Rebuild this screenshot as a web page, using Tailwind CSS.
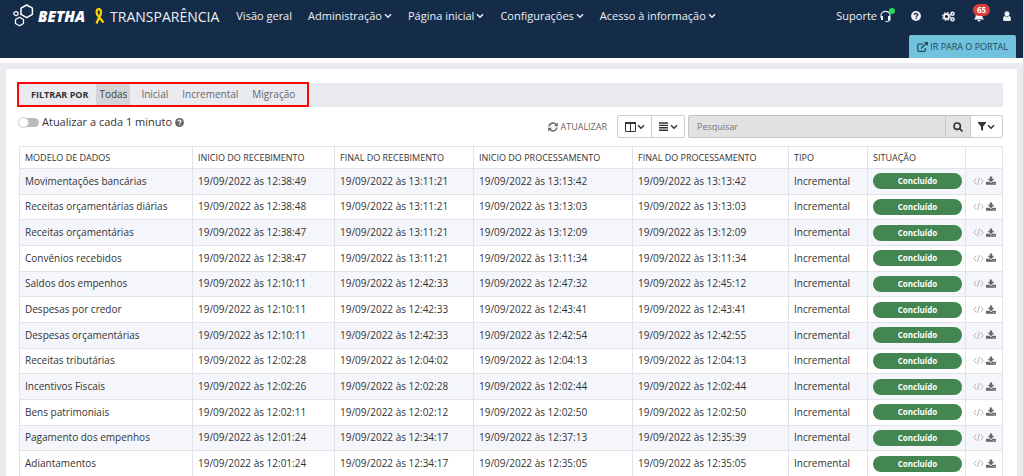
<!DOCTYPE html>
<html lang="pt-BR">
<head>
<meta charset="utf-8">
<meta name="viewport" content="width=device-width, initial-scale=1">
<title>Betha Transparência</title>
<script src="https://cdn.jsdelivr.net/npm/@tailwindcss/browser@4"></script>
</head>
<body class="min-h-screen overflow-x-hidden border-r border-[#d9dade] bg-[#eaebf0] font-['Open_Sans',sans-serif] text-[11px] text-[#333]">
<svg class="hidden">
  <symbol id="chev" viewBox="0 0 8 6"><path d="M1 1.2 4 4.2 7 1.2" fill="none" stroke="currentColor" stroke-width="1.5"/></symbol>
  <symbol id="code" viewBox="0 0 12 10"><path d="M3.5 2 .8 5l2.700 3M8.500 2l2.700 3-2.700 3M7 1 5 9" fill="none" stroke="currentColor" stroke-width="1"/></symbol>
  <symbol id="down" viewBox="0 0 1664 1536"><path fill="currentColor" d="M1280 1216q0-26-19-45t-45-19-45 19-19 45 19 45 45 19 45-19 19-45zm256 0q0-26-19-45t-45-19-45 19-19 45 19 45 45 19 45-19 19-45zm128-224v320q0 40-28 68t-68 28H96q-40 0-68-28t-28-68V992q0-40 28-68t68-28h465l135 136q58 56 136 56t136-56l136-136h464q40 0 68 28t28 68zm-325-569q17 41-14 70l-448 448q-18 19-45 19t-45-19L339 493q-31-29-14-70 17-39 59-39h256V0h384v384h256q42 0 59 39z"/></symbol>
  <symbol id="help" viewBox="0 0 12 12"><circle cx="6" cy="6" r="5.900" fill="currentColor"/><path d="M4 4.700C4 2.200 8 2.200 8 4.600 8 6 6.200 6 6.200 7.300M6.200 8.200v1.500" fill="none" stroke="var(--mark)" stroke-width="1.600"/></symbol>
</svg>

<header class="border-b-[5px] border-white bg-[#152c49] text-[#edf0f4]">
  <div class="flex h-8 items-center pr-3 pl-3">
    <a href="#" class="flex items-center" aria-label="Betha Transparência">
      <svg class="h-6 w-[22px]" viewBox="0 0 22 24" fill="none" stroke="#fff" stroke-linejoin="round"><path d="M14.700 1l5.700 3.200v6.200l-5.700 3.300L9 10.400V4.200z" stroke-width="1.500"/><path d="M7.500 13.300l4 2.200v4l-4 2.300-4-2.300v-4z" stroke-width="1.300"/><path d="M4 7.400l2.100 1.200v2L4 11.800 1.900 10.600v-2z" stroke-width="1.200"/></svg>
      <span class="ml-1 text-[15px] font-extrabold text-white italic">BETHA</span>
      <svg class="ml-[9px] h-4 w-[11px]" viewBox="0 0 11 16" fill="none" stroke="#fbd500" stroke-width="2.200"><path d="M2.500 15.500 5 9.500C8 6 7.500 1.200 4.800 1.200S1.500 6 5 9l4.500 5.500"/></svg>
      <span class="ml-[5px] text-[14px]">TRANSPARÊNCIA</span>
    </a>
    <nav class="ml-[17px] flex items-center gap-4 text-[11px] whitespace-nowrap">
      <a href="#">Visão geral</a>
      <a href="#" class="flex items-center gap-[2px]">Administração<svg class="h-[6px] w-2"><use href="#chev"/></svg></a>
      <a href="#" class="flex items-center gap-[2px]">Página inicial<svg class="h-[6px] w-2"><use href="#chev"/></svg></a>
      <a href="#" class="flex items-center gap-[2px]">Configurações<svg class="h-[6px] w-2"><use href="#chev"/></svg></a>
      <a href="#" class="flex items-center gap-[2px]">Acesso à informação<svg class="h-[6px] w-2"><use href="#chev"/></svg></a>
    </nav>
    <div class="ml-auto flex items-center text-[11px]">
      <a href="#" class="relative flex items-center gap-[3px]">Suporte
        <svg class="h-3 w-[11px]" viewBox="0 0 11 12" fill="none" stroke="currentColor"><path d="M1 8V5.500C1 0 10 0 10 5.500V10L8 11.500H5.500" stroke-width="1.100"/><path d="M2 6v4M9 6v4" stroke-width="2"/></svg>
        <span class="absolute top-0 -right-1 size-[6px] rounded-full bg-[#2bd957]"></span>
      </a>
      <button class="ml-5 [--mark:#152c49]" aria-label="Ajuda"><svg class="size-[10px]"><use href="#help"/></svg></button>
      <button class="ml-[21px]" aria-label="Opções"><svg class="h-[11px] w-[13px]" viewBox="0 0 13 11" fill="none" stroke="currentColor"><circle cx="4.500" cy="5.500" r="2.500" stroke-width="1.800"/><circle cx="4.500" cy="5.500" r="3.900" stroke-width="1.200" stroke-dasharray="1.600 1.460"/><circle cx="10.500" cy="2.700" r="1.500" stroke-width="1.600"/><circle cx="10.500" cy="8.300" r="1.500" stroke-width="1.600"/></svg></button>
      <button class="relative ml-[18px]" aria-label="Notificações, 65"><svg class="h-3 w-[12px]" viewBox="0 0 12 12" fill="currentColor"><path d="M6 1C3.500 1 2.800 3 2.800 5S2 8 1 9.500h10C10 8 9.200 7 9.200 5S8.500 1 6 1zM4.500 10h3a1.500 1.500 0 0 1-3 0z"/></svg>
        <span class="absolute -top-[6px] left-0 flex h-3 w-[17px] items-center justify-center rounded-full bg-[#df3c3c] text-[8px] font-bold text-white">65</span></button>
      <button class="ml-[18px]" aria-label="Usuário"><svg class="h-[10px] w-2" viewBox="0 0 8 10" fill="currentColor"><circle cx="4" cy="2.800" r="2.500"/><path d="M0 8.500C0 6 1 5 2 5c1 1 3 1 4 0 1 0 2 1 2 3.500Q8 10 6.500 10h-5Q0 10 0 8.500z"/></svg></button>
    </div>
  </div>
  <div class="flex justify-end pt-[3px] pr-[7px]">
    <a href="#" class="flex h-[23px] items-center gap-[2px] rounded-t-xs bg-[#71c2dd] px-2 text-[9px] text-[#24475c]"><svg class="h-[10px] w-[11px]" viewBox="0 0 11 10" fill="none" stroke="currentColor" stroke-width="1.200"><path d="M6 2H2Q.8 2 .8 3.200v5Q.8 9.300 2 9.300h5.200q1.200 0 1.200-1.200V6M4 6.500 9 1.500"/><path d="M7 0h4v4z" fill="currentColor" stroke="none"/></svg>IR PARA O PORTAL</a>
  </div>
</header>

<main class="mx-[6px] mt-[6px] rounded-t-xs bg-white pt-[13px] pr-[14px] pl-[11px]">
  <div class="flex">
    <div class="flex h-[25px] items-center border-2 border-[#fb0505] bg-[#eaebf0] pr-3 pl-3 text-[10px] text-[#666]">
      <strong class="mr-2 text-[9px] text-[#333]">FILTRAR POR</strong>
      <button class="h-[21px] bg-[#d3d4d7] px-[3px] text-[#444]">Todas</button>
      <button class="ml-[11px]">Inicial</button>
      <button class="ml-[14px]">Incremental</button>
      <button class="ml-[14px]">Migração</button>
    </div>
    <div class="mt-px h-[24px] flex-1 bg-[#eaebf0]"></div>
  </div>

  <div class="mt-2 flex">
    <label class="flex h-[14px] items-center gap-[3px] text-[11px]"><input type="checkbox" class="relative ml-[3px] h-[9px] w-[19px] appearance-none rounded-full bg-[#bbb] before:absolute before:-top-px before:-left-[2px] before:size-[11px] before:rounded-full before:border before:border-[#ccc] before:bg-white">Atualizar a cada 1 minuto
      <svg class="size-[9px] text-[#666] [--mark:#fff]"><use href="#help"/></svg></label>
    <div class="ml-auto flex h-[23px] items-center">
      <button class="mr-[10px] flex items-center gap-[2px] text-[9px] text-[#666]"><svg class="size-[10px]" viewBox="0 0 10 10" fill="none" stroke="currentColor" stroke-width="1.500"><path d="M1 4.500C1.500 1 6 0 8 2.500M9 5.500C8.500 9 4 10 2 7.500"/><path d="M9.800.5v3.700H6zM.2 9.500V5.800H4z" fill="currentColor" stroke="none"/></svg>ATUALIZAR</button>
      <button class="flex h-[23px] w-[35px] items-center justify-center gap-px rounded-l-xs border border-[#ccc]" aria-label="Colunas"><svg class="h-[10px] w-[11px]" viewBox="0 0 11 10" fill="none" stroke="currentColor"><path d="M.5 1v8.500h10V1M5.500 1v8"/><path d="M0 1h11" stroke-width="2"/></svg><svg class="h-[6px] w-2"><use href="#chev"/></svg></button>
      <button class="-ml-px flex h-[23px] w-[34px] items-center justify-center gap-[2px] rounded-r-xs border border-[#ccc]" aria-label="Densidade"><svg class="h-[9px] w-[9px]" viewBox="0 0 9 9" stroke="currentColor" stroke-width="1.400"><path d="M0 1h9M0 3.400h9M0 5.800h9M0 8.200h9"/></svg><svg class="h-[6px] w-2"><use href="#chev"/></svg></button>
      <input type="text" placeholder="Pesquisar" aria-label="Pesquisar" class="ml-[3px] h-[23px] w-[258px] rounded-l-xs border border-[#c4c4c4] bg-[#e2e2e2] px-2 text-[9px] placeholder:text-[#777]">
      <button class="-ml-px flex h-[23px] w-[26px] items-center justify-center border border-[#c4c4c4] bg-[#e2e2e2]" aria-label="Buscar"><svg class="size-[10px]" viewBox="0 0 10 10" fill="none" stroke="currentColor" stroke-width="1.600"><circle cx="4.200" cy="4.200" r="3.200"/><path d="m6.500 6.500 3 3"/></svg></button>
      <button class="-ml-px flex h-[23px] w-[33px] items-center justify-center gap-px rounded-r-xs border border-[#ccc]" aria-label="Filtros"><svg class="h-[9px] w-2" viewBox="0 0 8 9" fill="currentColor"><path d="M0 0h8v1L5 4.500V9L3 7.500v-3L0 1z"/></svg><svg class="h-[6px] w-2"><use href="#chev"/></svg></button>
    </div>
  </div>

  <div class="mt-2 pl-[2px]">
  <table class="h-[331px] w-full table-fixed border-collapse text-left text-[10px] whitespace-nowrap [&_td]:border [&_td]:border-[#e2e3e8] [&_td]:px-[5px] [&_td]:py-0 [&_th]:h-[22px] [&_th]:border [&_th]:border-[#e2e3e8] [&_th]:px-[5px] [&_th]:py-0 [&_th]:text-[9px] [&_th]:font-medium">
    <colgroup><col><col class="w-[142px]"><col class="w-[139px]"><col class="w-[159px]"><col class="w-[156px]"><col class="w-[79px]"><col class="w-[98px]"><col class="w-[37px]"></colgroup>
    <thead><tr><th>MODELO DE DADOS</th><th>INICIO DO RECEBIMENTO</th><th>FINAL DO RECEBIMENTO</th><th>INICIO DO PROCESSAMENTO</th><th>FINAL DO PROCESSAMENTO</th><th>TIPO</th><th>SITUAÇÃO</th><th aria-label="Ações"></th></tr></thead>
    <tbody id="rows"></tbody>
  </table>
  </div>
</main>
<script>
const rows = [
  ["Movimentações bancárias","12:38:49","13:11:21","13:13:42","13:13:42"],
  ["Receitas orçamentárias diárias","12:38:48","13:11:21","13:13:03","13:13:03"],
  ["Receitas orçamentárias","12:38:47","13:11:21","13:12:09","13:12:09"],
  ["Convênios recebidos","12:38:47","13:11:21","13:11:34","13:11:34"],
  ["Saldos dos empenhos","12:10:11","12:42:33","12:47:32","12:45:12"],
  ["Despesas por credor","12:10:11","12:42:33","12:43:41","12:43:41"],
  ["Despesas orçamentárias","12:10:11","12:42:33","12:42:54","12:42:55"],
  ["Receitas tributárias","12:02:28","12:04:02","12:04:13","12:04:13"],
  ["Incentivos Fiscais","12:02:26","12:02:28","12:02:44","12:02:44"],
  ["Bens patrimoniais","12:02:11","12:02:12","12:02:50","12:02:50"],
  ["Pagamento dos empenhos","12:01:24","12:34:17","12:37:13","12:35:39"],
  ["Adiantamentos","12:01:24","12:34:17","12:35:05","12:35:05"]
];
document.getElementById("rows").innerHTML = rows.map(([name, ...times]) => `<tr class="odd:bg-[#f4f6fb]"><td>${name}</td>${times.map(t => `<td>19/09/2022 às ${t}</td>`).join("")}<td>Incremental</td><td><span class="flex h-4 w-[89px] items-center justify-center rounded-full bg-[#438651] text-[8px] font-bold text-white">Concluído</span></td><td><span class="flex items-center gap-[2px] pl-[2px]"><button class="text-[#aaa]" aria-label="Ver código"><svg class="block h-[9px] w-[11px]"><use href="#code"/></svg></button><button class="text-[#666]" aria-label="Baixar"><svg class="block h-[10px] w-[10px]"><use href="#down"/></svg></button></span></td></tr>`).join("");
</script>
</body>
</html>
